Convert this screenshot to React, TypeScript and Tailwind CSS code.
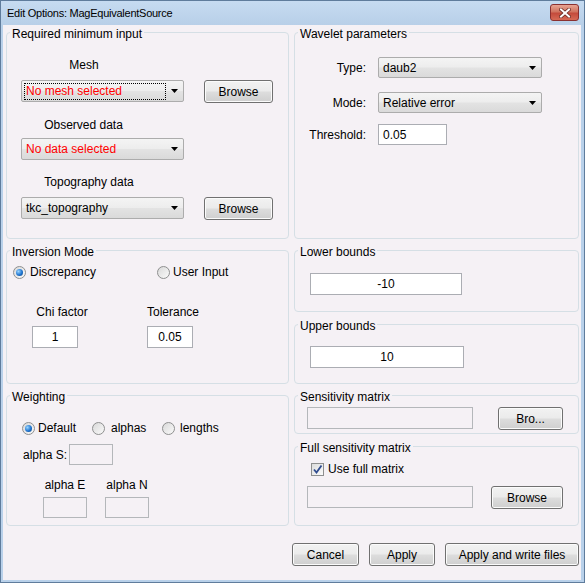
import React from 'react';

function Group({ title, className = '', children }: { title: string; className?: string; children?: React.ReactNode }) {
  return (
    <div className={`relative rounded-[4px] border border-[#d5dfe5] ${className}`}>
      <span className="absolute left-[3px] top-[-6px] bg-[#f5f1f5] px-[2px] text-[12px] leading-[14px]">{title}</span>
      {children}
    </div>
  );
}

function Arrow() {
  return (
    <svg width="7" height="4" viewBox="0 0 7 4" className="shrink-0">
      <path d="M0 0h7L3.5 4z" fill="#000" />
    </svg>
  );
}

function Combo({ value, className, red, focused }: { value: string; className: string; red?: boolean; focused?: boolean }) {
  return (
    <div
      className={`flex items-center justify-between rounded-[2px] border border-[#acacac] bg-[linear-gradient(to_bottom,#f4f4f4_0%,#ededed_48%,#e3e3e3_52%,#dadada_100%)] pl-[2px] pr-[5px] ${className}`}
    >
      {focused ? (
        <span className="flex h-[17px] w-[142px] items-center border border-dotted border-black pl-[1px] text-[#ff0000]">{value}</span>
      ) : (
        <span className={`pl-[2px] ${red ? 'text-[#ff0000]' : 'text-black'}`}>{value}</span>
      )}
      <Arrow />
    </div>
  );
}

function Button({ label, className }: { label: string; className: string }) {
  return (
    <button
      type="button"
      className={`flex h-[23px] items-center justify-center rounded-[3px] border border-[#707070] bg-[linear-gradient(to_bottom,#f2f2f2_0%,#ebebeb_48%,#dddddd_52%,#cfcfcf_100%)] text-[12px] shadow-[inset_0_0_0_1px_#fbfbfb] ${className}`}
    >
      {label}
    </button>
  );
}

function Field({ value = '', className, center }: { value?: string; className: string; center?: boolean }) {
  return (
    <div className={`flex items-center border border-[#abadb3] bg-white px-[4px] ${center ? 'justify-center' : ''} ${className}`}>
      {value}
    </div>
  );
}

function Disabled({ className }: { className: string }) {
  return <div className={`border border-[#b4b7ba] ${className}`} />;
}

function Radio({ checked }: { checked?: boolean }) {
  return (
    <span className="flex h-[13px] w-[13px] shrink-0 items-center justify-center rounded-full border border-[#8e8f8f] bg-linear-to-br from-[#d9d9d9] to-[#fafafa]">
      {checked && (
        <span className="h-[7px] w-[7px] rounded-full bg-[radial-gradient(circle_at_35%_35%,#9ad6ff,#1f74d0_55%,#0b3d7a)]" />
      )}
    </span>
  );
}

function Checkbox() {
  return (
    <span className="flex h-[13px] w-[13px] shrink-0 items-center justify-center border border-[#8e8f8f] bg-linear-to-br from-[#dcdcdc] to-[#fbfbfb]">
      <svg width="11" height="11" viewBox="0 0 11 11">
        <path d="M2 5.5 L4.5 8.5 L9.5 1.5" fill="none" stroke="#2f4b8f" strokeWidth="1.8" />
      </svg>
    </span>
  );
}

export default function App() {
  return (
    <div className="flex h-[583px] w-[585px] flex-col border border-[#5f7c9c] bg-[#b9d1ea] font-[family-name:Liberation_Sans,Arial,sans-serif] text-[12px] leading-[16px] text-black">
      {/* Title bar */}
      <div className="flex h-[24px] shrink-0 items-center justify-between bg-linear-to-b from-[#c6dbf1] to-[#b8cfe8] pl-[6px] pr-[5px]">
        <span className="text-[11px] tracking-[-0.25px]">Edit Options: MagEquivalentSource</span>
        <div className="flex h-[17px] w-[29px] items-center justify-center self-start mt-[3px] rounded-[3px] border border-[#8a3030] bg-[linear-gradient(to_bottom,#e8a493_0%,#d0735f_45%,#c44b3c_55%,#d66a55_100%)]">
          <svg width="12" height="10" viewBox="0 0 12 10">
            <path d="M2 1.5 L10 8.5 M10 1.5 L2 8.5" stroke="#6b2a22" strokeWidth="3.6" strokeLinecap="square" />
            <path d="M2 1.5 L10 8.5 M10 1.5 L2 8.5" stroke="#ffffff" strokeWidth="2" strokeLinecap="square" />
          </svg>
        </div>
      </div>

      {/* Client area */}
      <div className="mx-[2px] mb-[2px] mr-[3px] flex flex-1 flex-col bg-[#f5f1f5] pl-[3px] pr-[2px] pt-[7px]">
        {/* Row 1 */}
        <div className="flex h-[207px] gap-[5px]">
          <Group title="Required minimum input" className="w-[283px]">
            <div className="flex flex-col pl-[14px]">
              <div className="mt-[24px] w-[126px] text-center">Mesh</div>
              <div className="mt-[7px] flex h-[23px] items-start gap-[20px]">
                <Combo value="No mesh selected" className="h-[22px] w-[163px]" focused />
                <Button label="Browse" className="w-[69px]" />
              </div>
              <div className="mt-[14px] w-[125px] text-center">Observed data</div>
              <div className="mt-[5px]">
                <Combo value="No data selected" className="h-[22px] w-[163px]" red />
              </div>
              <div className="mt-[14px] w-[136px] text-center">Topography data</div>
              <div className="mt-[7px] flex h-[23px] items-start gap-[20px]">
                <Combo value="tkc_topography" className="h-[22px] w-[163px]" />
                <Button label="Browse" className="w-[69px]" />
              </div>
            </div>
          </Group>
          <Group title="Wavelet parameters" className="w-[285px]">
            <div className="flex flex-col">
              <div className="mt-[24px] flex h-[21px] items-center gap-[12px]">
                <span className="w-[71px] text-right">Type:</span>
                <Combo value="daub2" className="h-[21px] w-[164px]" />
              </div>
              <div className="mt-[14px] flex h-[21px] items-center gap-[12px]">
                <span className="w-[71px] text-right">Mode:</span>
                <Combo value="Relative error" className="h-[21px] w-[164px]" />
              </div>
              <div className="mt-[11px] flex h-[21px] items-center gap-[12px]">
                <span className="w-[71px] text-right">Threshold:</span>
                <Field value="0.05" className="h-[21px] w-[69px]" />
              </div>
            </div>
          </Group>
        </div>

        {/* Row 2 */}
        <div className="mt-[11px] flex h-[134px] gap-[5px]">
          <Group title="Inversion Mode" className="w-[283px]">
            <div className="flex flex-col">
              <div className="mt-[13px] flex h-[16px] items-center pl-[6px]">
                <label className="flex w-[144px] items-center gap-[4px]">
                  <Radio checked />
                  Discrepancy
                </label>
                <label className="flex items-center gap-[3px]">
                  <Radio />
                  User Input
                </label>
              </div>
              <div className="mt-[24px] flex pl-[25px]">
                <div className="flex w-[115px] flex-col">
                  <span className="w-[60px] text-center">Chi factor</span>
                  <Field value="1" center className="mt-[6px] h-[22px] w-[46px]" />
                </div>
                <div className="flex flex-col">
                  <span className="w-[52px] text-center">Tolerance</span>
                  <Field value="0.05" center className="mt-[6px] h-[22px] w-[46px]" />
                </div>
              </div>
            </div>
          </Group>
          <div className="flex w-[285px] flex-col gap-[12px]">
            <Group title="Lower bounds" className="h-[62px]">
              <div className="pl-[15px] pt-[22px]">
                <Field value="-10" center className="h-[22px] w-[152px]" />
              </div>
            </Group>
            <Group title="Upper bounds" className="h-[60px]">
              <div className="pl-[15px] pt-[21px]">
                <Field value="10" center className="h-[22px] w-[154px]" />
              </div>
            </Group>
          </div>
        </div>

        {/* Row 3 */}
        <div className="mt-[11px] flex h-[131px] gap-[5px]">
          <Group title="Weighting" className="w-[283px]">
            <div className="flex flex-col">
              <div className="mt-[24px] flex h-[16px] items-center pl-[15px]">
                <label className="flex w-[70px] items-center gap-[3px]">
                  <Radio checked />
                  Default
                </label>
                <label className="flex w-[70px] items-center gap-[6px]">
                  <Radio />
                  alphas
                </label>
                <label className="flex items-center gap-[5px]">
                  <Radio />
                  lengths
                </label>
              </div>
              <div className="mt-[8px] flex h-[21px] items-end pl-[16px]">
                <span className="w-[46px] pb-[2px]">alpha S:</span>
                <Disabled className="h-[21px] w-[44px]" />
              </div>
              <div className="mt-[12px] flex gap-[18px] pl-[36px]">
                <div className="flex w-[44px] flex-col items-center">
                  <span className="whitespace-nowrap">alpha E</span>
                  <Disabled className="mt-[4px] h-[21px] w-[44px]" />
                </div>
                <div className="flex w-[44px] flex-col items-center">
                  <span className="whitespace-nowrap">alpha N</span>
                  <Disabled className="mt-[4px] h-[21px] w-[44px]" />
                </div>
              </div>
            </div>
          </Group>
          <div className="flex w-[285px] flex-col gap-[12px]">
            <Group title="Sensitivity matrix" className="h-[39px]">
              <div className="flex items-start gap-[25px] pl-[12px] pt-[11px]">
                <Disabled className="h-[22px] w-[166px]" />
                <Button label="Bro..." className="w-[65px]" />
              </div>
            </Group>
            <Group title="Full sensitivity matrix" className="flex-1">
              <div className="flex flex-col">
                <label className="mt-[14px] flex h-[16px] items-center gap-[4px] pl-[16px]">
                  <Checkbox />
                  Use full matrix
                </label>
                <div className="mt-[9px] flex items-start gap-[18px] pl-[12px]">
                  <Disabled className="h-[22px] w-[166px]" />
                  <Button label="Browse" className="w-[72px]" />
                </div>
              </div>
            </Group>
          </div>
        </div>

        {/* Buttons */}
        <div className="mt-[17px] flex justify-end gap-[10px]">
          <Button label="Cancel" className="w-[67px]" />
          <Button label="Apply" className="w-[66px]" />
          <Button label="Apply and write files" className="w-[134px]" />
        </div>
      </div>
    </div>
  );
}
